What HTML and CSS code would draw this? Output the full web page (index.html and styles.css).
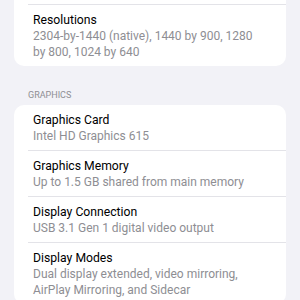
FILE: index.html
```html
<!DOCTYPE html>
<html>
<head>
<meta name="viewport" content="width=device-width, initial-scale=1">
<link rel="stylesheet" href="styles.css">
</head>
<body>
<div class="card card-cut">
  <div class="row">
    <div class="title">Resolutions</div>
    <div class="detail">2304-by-1440 (native), 1440 by 900, 1280 by 800, 1024 by 640</div>
  </div>
</div>

<div class="group-title">Graphics</div>
<div class="card">
  <div class="row">
    <div class="title">Graphics Card</div>
    <div class="detail">Intel HD Graphics 615</div>
  </div>
  <div class="row">
    <div class="title">Graphics Memory</div>
    <div class="detail">Up to 1.5 GB shared from main memory</div>
  </div>
  <div class="row">
    <div class="title">Display Connection</div>
    <div class="detail">USB 3.1 Gen 1 digital video output</div>
  </div>
  <div class="row">
    <div class="title">Display Modes</div>
    <div class="detail">Dual display extended, video mirroring, AirPlay Mirroring, and Sidecar</div>
  </div>
</div>
</body>
</html>
```

FILE: styles.css
```css
body {
  margin: 0;
  background-color: #f2f2f7;
  font-family: Roboto, "Noto Sans", sans-serif;
}
.card {
  background-color: #fff;
  margin: 0 14px;
  border-radius: 10px;
  overflow: hidden;
}
.card-cut {
  border-top-left-radius: 0;
  border-top-right-radius: 0;
  padding-top: 4px;
}
.card-cut .row {
  border-top: 1px solid #e3e3e8;
}
.row {
  margin-left: 14px;
  padding: 7px 20px 6px 5px;
}
.row + .row {
  border-top: 1px solid #e3e3e8;
}
.title {
  font-size: 12.2px;
  line-height: 16px;
  color: #000;
}
.detail {
  font-size: 12px;
  line-height: 16px;
  color: #8e8e93;
}
.group-title {
  padding: 24px 28px 4px;
  font-size: 9px;
  line-height: 11px;
  text-transform: uppercase;
  color: #8e8e93;
}
```
